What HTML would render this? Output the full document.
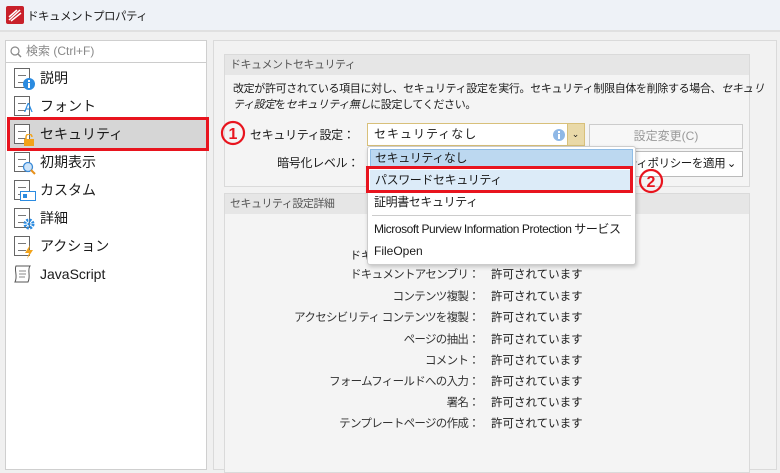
<!DOCTYPE html>
<html><head><meta charset="utf-8"><style>
*{box-sizing:border-box;margin:0;padding:0}
body{width:780px;height:460px;overflow:hidden;background:#f0f0f0;font-family:"Liberation Sans","Noto Sans CJK JP",sans-serif;font-size:12px;color:#1a1a1a;position:relative}
.abs{position:absolute;white-space:nowrap}
.title{left:0;top:0;width:780px;height:30px;background:#eef2f7;}
.left{left:5px;top:40px;width:202px;height:430px;background:#fff;border:1px solid #cfcfcf}
.item{position:absolute;left:0;width:200px;height:28px;font-size:14px;line-height:28px;padding-left:34px}
.ic{position:absolute;left:8px;top:4px;width:16px;height:20px;border:1px solid #666;background:#fff}
.ic:after{content:"";position:absolute;left:3px;top:6px;width:8px;height:6px;border-top:1px solid #777;border-bottom:1px solid #777}
.grp{background:#f4f4f4;border:1px solid #dadada}
.gh{background:#e6e6e6;height:20px;line-height:20px;padding-left:5px;color:#555;font-size:11px;letter-spacing:-0.5px}
.row{position:absolute;left:230px;width:440px;font-size:11.5px;height:20px;line-height:20px;white-space:nowrap}
.row span{display:inline-block;width:249px;text-align:right;color:#333;letter-spacing:-0.7px}
.row b{font-weight:normal;margin-left:12px;letter-spacing:0}
.red{border:3px solid #e8141e}
</style></head><body>
<div class="abs title"></div>
<svg class="abs" style="left:6px;top:6px" width="18" height="18"><rect width="18" height="18" rx="2" fill="#c8202a"/><path d="M3 14 L14 4 M5 15 L15 7 M3 11 L11 4" stroke="#fff" stroke-width="1.5"/></svg>
<div class="abs" style="left:27px;top:8px;font-size:11.5px;letter-spacing:-0.5px">ドキュメントプロパティ</div>
<div class="abs" style="left:0;top:30px;width:780px;height:2px;background:#e0e0e0"></div>

<div class="abs left">
 <div style="height:22px;border-bottom:1px solid #ccc;color:#888;font-size:12px;line-height:21px;padding-left:20px;position:relative"><svg style="position:absolute;left:4px;top:5px" width="12" height="12"><circle cx="5" cy="5" r="4" fill="none" stroke="#888" stroke-width="1.2"/><path d="M8 8 L11 11" stroke="#888" stroke-width="1.4"/></svg>検索 (Ctrl+F)</div>
 <div class="item" style="top:23px"><div class="ic"></div><svg class="abs" style="left:17px;top:14px" width="12" height="12"><circle cx="6" cy="6" r="6" fill="#2b8be0"/><rect x="5" y="5" width="2" height="5" fill="#fff"/><rect x="5" y="2" width="2" height="2" fill="#fff"/></svg>説明</div>
 <div class="item" style="top:51px"><div class="ic"></div><span class="abs" style="left:18px;top:6px;color:#2b8be0;font-size:13px;line-height:20px">A</span>フォント</div>
 <div class="item" style="top:79px;background:#d6d6d6;left:4px;width:196px;padding-left:30px"><div class="ic" style="left:4px"></div><svg class="abs" style="left:13px;top:14px" width="12" height="12"><rect x="1" y="5" width="10" height="7" fill="#f2a31a"/><path d="M3 5 V3 a3 3 0 0 1 6 0" fill="none" stroke="#f2a31a" stroke-width="1.5"/></svg>セキュリティ</div>
 <div class="item" style="top:107px"><div class="ic"></div><svg class="abs" style="left:16px;top:13px" width="14" height="14"><circle cx="6" cy="6" r="4.5" fill="#cde4fa" stroke="#3a8ad6" stroke-width="1.3"/><path d="M9 9 L13 13" stroke="#e8901a" stroke-width="2"/></svg>初期表示</div>
 <div class="item" style="top:135px"><div class="ic"></div><svg class="abs" style="left:14px;top:15px" width="16" height="10"><rect x="0.5" y="0.5" width="15" height="9" fill="#fff" stroke="#2b8be0"/><rect x="3" y="3" width="4" height="4" fill="#2b8be0"/></svg>カスタム</div>
 <div class="item" style="top:163px"><div class="ic"></div><svg class="abs" style="left:17px;top:14px" width="12" height="12"><circle cx="6" cy="6" r="4" fill="none" stroke="#2b8be0" stroke-width="3" stroke-dasharray="2 1.2"/><circle cx="6" cy="6" r="1.5" fill="#2b8be0"/></svg>詳細</div>
 <div class="item" style="top:191px"><div class="ic"></div><svg class="abs" style="left:18px;top:13px" width="10" height="14"><path d="M6 0 L1 8 H5 L3 14 L9 5 H5 Z" fill="#f2a31a"/></svg>アクション</div>
 <div class="item" style="top:219px"><svg class="abs" style="left:6px;top:4px" width="22" height="20"><path d="M4 2 H18 C15 6 19 12 16 18 H3 C6 12 2 6 4 2 Z" fill="#fff" stroke="#555"/><path d="M7 7 H14 M7 10 H14 M7 13 H13" stroke="#888"/></svg>JavaScript</div>
</div>
<div class="abs red" style="left:7px;top:117px;width:202px;height:34px"></div>

<div class="abs" style="left:213px;top:40px;width:564px;height:430px;border:1px solid #dadada;background:#f2f2f2"></div>
<div class="abs grp" style="left:224px;top:54px;width:526px;height:133px"><div class="gh">ドキュメントセキュリティ</div>
 <div style="padding:6px 8px;font-size:11px;line-height:16px;letter-spacing:-0.35px;white-space:nowrap">改定が許可されている項目に対し、セキュリティ設定を実行。セキュリティ制限自体を削除する場合、<i>セキュリ</i><br><i>ティ設定</i>を<i>セキュリティ無し</i>に設定してください。</div>
</div>
<div class="abs" style="left:250px;top:126px;width:103px;text-align:right;font-size:12px;letter-spacing:-0.3px">セキュリティ設定：</div>
<div class="abs" style="left:250px;top:154px;width:109px;text-align:right;font-size:12px;letter-spacing:-0.3px">暗号化レベル：</div>
<div class="abs" style="left:367px;top:123px;width:218px;height:23px;background:#fff;border:1px solid #d8c07a;font-size:12px;line-height:21px;padding-left:6px;letter-spacing:1px">セキュリティなし
 <svg class="abs" style="left:184px;top:4px" width="14" height="14"><circle cx="7" cy="7" r="6" fill="#8fb8e6"/><rect x="6" y="6" width="2" height="5" fill="#fff"/><rect x="6" y="3" width="2" height="2" fill="#fff"/></svg>
 <div class="abs" style="right:0;top:0;width:17px;height:21px;background:#e9d9a8;border-left:1px solid #d8c07a;text-align:center;font-size:9px;line-height:21px">⌄</div></div>
<div class="abs" style="left:589px;top:124px;width:154px;height:25px;background:#f7f7f7;border:1px solid #ccc;text-align:center;line-height:23px;color:#999">設定変更(C)</div>
<div class="abs" style="left:589px;top:151px;width:154px;height:26px;background:#fff;border:1px solid #bbb;line-height:24px;padding-left:36px;font-size:11.5px;letter-spacing:-0.4px;overflow:hidden">ティポリシーを適用<span style="position:absolute;right:6px;top:0">⌄</span></div>

<div class="abs grp" style="left:224px;top:193px;width:526px;height:280px"><div class="gh">セキュリティ設定詳細</div></div>
<div class="abs" style="left:350px;top:247px;font-size:11px">ドキ</div>
<div class="row" style="top:265px"><span>ドキュメントアセンブリ：</span><b>許可されています</b></div>
<div class="row" style="top:287px"><span>コンテンツ複製：</span><b>許可されています</b></div>
<div class="row" style="top:308px"><span>アクセシビリティ コンテンツを複製：</span><b>許可されています</b></div>
<div class="row" style="top:330px"><span>ページの抽出：</span><b>許可されています</b></div>
<div class="row" style="top:351px"><span>コメント：</span><b>許可されています</b></div>
<div class="row" style="top:372px"><span>フォームフィールドへの入力：</span><b>許可されています</b></div>
<div class="row" style="top:393px"><span>署名：</span><b>許可されています</b></div>
<div class="row" style="top:414px"><span>テンプレートページの作成：</span><b>許可されています</b></div>

<div class="abs" style="left:367px;top:146px;width:269px;height:119px;background:#fff;border:1px solid #ccc;border-radius:3px;box-shadow:1px 2px 4px rgba(0,0,0,.2);font-size:12px">
 <div style="position:absolute;left:2px;top:2px;width:263px;height:19px;background:#bcd8f0;border:1px solid #90bde6;line-height:17px;padding-left:4px;letter-spacing:-0.4px">セキュリティなし</div>
 <div style="position:absolute;left:2px;top:23px;width:263px;height:20px;background:#dcebf8;line-height:20px;padding-left:5px;letter-spacing:-0.4px">パスワードセキュリティ</div>
 <div style="position:absolute;left:6px;top:45px;line-height:20px;letter-spacing:-0.4px">証明書セキュリティ</div>
 <div style="position:absolute;left:4px;top:68px;width:259px;height:1px;background:#ccc"></div>
 <div style="position:absolute;left:6px;top:72px;line-height:20px;white-space:nowrap;font-size:12px;letter-spacing:-0.45px">Microsoft Purview Information Protection サービス</div>
 <div style="position:absolute;left:6px;top:94px;line-height:20px">FileOpen</div>
</div>
<div class="abs red" style="left:366px;top:166px;width:267px;height:27px"></div>
<svg class="abs" style="left:220px;top:120px" width="26" height="26"><circle cx="13" cy="13" r="11" fill="none" stroke="#e8141e" stroke-width="2.2"/><text x="13" y="19" text-anchor="middle" font-family="Liberation Sans" font-weight="bold" font-size="16" fill="#e8141e">1</text></svg>
<svg class="abs" style="left:638px;top:168px" width="26" height="26"><circle cx="13" cy="13" r="11" fill="none" stroke="#e8141e" stroke-width="2.2"/><text x="13" y="19" text-anchor="middle" font-family="Liberation Sans" font-weight="bold" font-size="16" fill="#e8141e">2</text></svg>
</body></html>
